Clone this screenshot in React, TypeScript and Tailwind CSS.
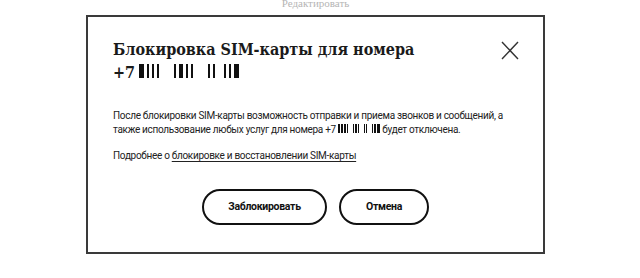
import React from "react";

// redacted phone digits: widths of the black strokes, 0 = gap
const titleBars = [5, 2, 2, 2, 0, 0, 2, 4, 2, 2, 0, 0, 2, 2, 0, 2, 2, 5];
const textBars = [2, 2, 2, 1, 0, 1, 2, 1, 0, 1, 1, 0, 1, 2, 3];

function Redacted({ bars, h, gap }: { bars: number[]; h: string; gap: string }) {
    return (
        <span className={`inline-flex items-end ${gap} align-baseline`}>
            {bars.map((w, i) =>
                w === 0 ? (
                    <span key={i} className="inline-block w-[3px]" />
                ) : (
                    <span
                        key={i}
                        className={`inline-block bg-[#111] ${h}`}
                        style={{ width: w }}
                    />
                )
            )}
        </span>
    );
}

export default function App() {
    return (
        <div className="w-[640px] h-[278px] bg-white overflow-hidden">
            <div className="w-[631px] flex flex-col items-center">
                <div
                    className="text-[11px] leading-[14px] -mt-[4px] text-[#b5b5b5]"
                    style={{ fontFamily: "'Liberation Serif', serif" }}
                >
                    Редактировать
                </div>
            </div>
            <div className="ml-[86px] mt-[5px] w-[459px] h-[239px] border-2 border-[#3a3a3a] bg-white pl-[25px] pr-[22px] pt-[21px]">
                <div className="flex justify-between items-start">
                    <h2
                        className="text-[16px] leading-[23px] font-bold text-[#1a1a1a] whitespace-nowrap"
                        style={{ fontFamily: "'DejaVu Serif Condensed', 'DejaVu Serif', serif" }}
                    >
                        Блокировка SIM-карты для номера
                        <br />
                        +7
                        <span className="ml-[4px]">
                            <Redacted bars={titleBars} h="h-[14px]" gap="gap-[3px]" />
                        </span>
                    </h2>
                    <button className="mt-[2px] mr-[1px] w-[20px] h-[20px] flex items-center justify-center">
                        <svg width="18" height="19" viewBox="0 0 18 19" fill="none">
                            <path d="M1 1L17 18M17 1L1 18" stroke="#333" strokeWidth="1.4" />
                        </svg>
                    </button>
                </div>
                <div
                    className="mt-[25px] text-[10px] tracking-[-0.3px] leading-[14px] text-[#222] whitespace-nowrap"
                    style={{ fontFamily: "Roboto, sans-serif" }}
                >
                    <p>
                        После блокировки SIM-карты возможность отправки и приема звонков и сообщений, а
                        <br />
                        также использование любых услуг для номера +7{" "}
                        <Redacted bars={textBars} h="h-[9px]" gap="gap-[1px]" /> будет отключена.
                    </p>
                    <p className="mt-[12px]">
                        Подробнее о{" "}
                        <a href="#" className="underline underline-offset-2">
                            блокировке и восстановлении SIM-карты
                        </a>
                    </p>
                </div>
                <div
                    className="mt-[26px] flex justify-center gap-[12px] pr-[3px]"
                    style={{ fontFamily: "Roboto, sans-serif" }}
                >
                    <button className="w-[125px] h-[36px] rounded-full border-2 border-[#111] text-[10.5px] tracking-[-0.3px] font-bold text-[#111]">
                        Заблокировать
                    </button>
                    <button className="w-[90px] h-[36px] rounded-full border-2 border-[#111] text-[10.5px] tracking-[-0.3px] font-bold text-[#111]">
                        Отмена
                    </button>
                </div>
            </div>
        </div>
    );
}
